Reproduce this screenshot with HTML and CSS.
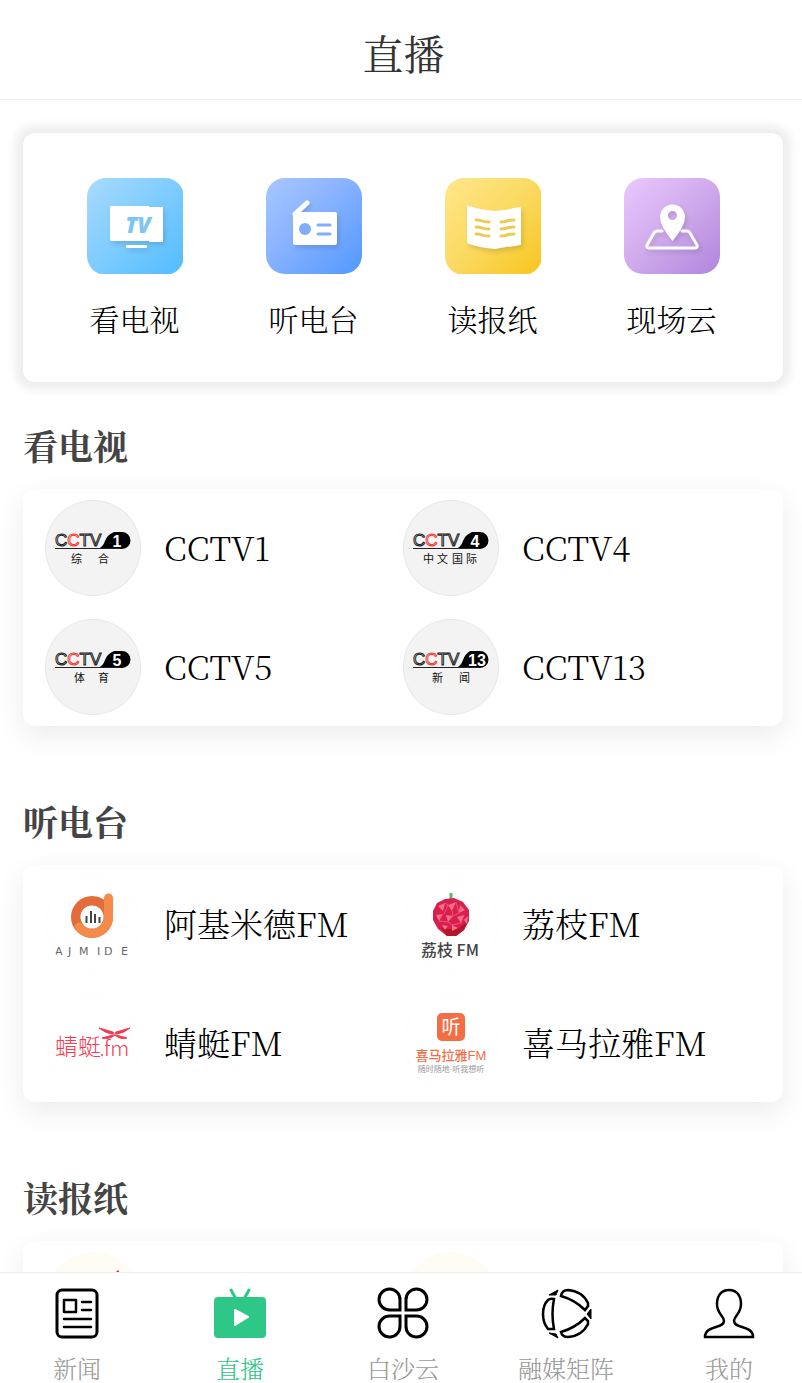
FILE: index.html
```
<!DOCTYPE html>
<html lang="zh-CN">
<head>
<meta charset="utf-8">
<meta name="viewport" content="width=device-width, initial-scale=1">
<title>直播</title>
<link rel="stylesheet" href="styles.css">
</head>

<body>
<header class="header">
    <h1>直播</h1>
</header>

<main class="content">
    <!-- 快捷入口 -->
    <nav class="entry">
        <a href="#tv">
            <svg viewBox="0 0 96 96">
                <defs><linearGradient id="g1" x1="0" y1="0" x2="1" y2="1"><stop offset="0" stop-color="#a9dbff"/><stop offset="1" stop-color="#51bcff"/></linearGradient></defs>
                <rect width="97" height="97" rx="19" fill="url(#g1)"/>
                <g class="glyph">
                    <path d="M24 28h38v1h14v35H62v-1H24q-1 0-1-1V29q0-1 1-1z" fill="#fff"/>
                    <rect x="39" y="67" width="21" height="3" rx="1" fill="#fff"/>
                </g>
                <text class="tv" x="51" y="55">TV</text>
            </svg>
            <span>看电视</span>
        </a>
        <a href="#radio">
            <svg viewBox="0 0 96 96">
                <defs><linearGradient id="g2" x1="0" y1="0" x2="1" y2="1"><stop offset="0" stop-color="#a8c7ff"/><stop offset=".4" stop-color="#8cb4ff"/><stop offset="1" stop-color="#5198ff"/></linearGradient></defs>
                <rect width="96" height="96" rx="19" fill="url(#g2)"/>
                <g class="glyph" fill="#fff">
                    <path d="M29 36L41 25" stroke="#fff" stroke-width="5" stroke-linecap="round"/>
                    <path d="M27 37q0-3 3-3h39q2 0 2 2v29q0 2-2 2H29q-2 0-2-2z"/>
                </g>
                <circle cx="39" cy="51" r="6" fill="#82adfa"/>
                <path d="M52 47h12M52 56h12" stroke="#82adfa" stroke-width="3" stroke-linecap="round"/>
            </svg>
            <span>听电台</span>
        </a>
        <a href="#paper">
            <svg viewBox="0 0 96 96">
                <defs><linearGradient id="g3" x1="0" y1="0" x2="1" y2="1"><stop offset="0" stop-color="#ffe78c"/><stop offset=".5" stop-color="#fbd961"/><stop offset="1" stop-color="#f7c51c"/></linearGradient></defs>
                <rect width="97" height="97" rx="19" fill="url(#g3)"/>
                <path class="glyph" d="M22 29q0-2 2-1 12 4 26 5 12-1 24-4 2 0 2 1v37q-14 2-26 4-14-1-26-5-2 0-2-2z" fill="#fff"/>
                <path d="M31 42q4 0 6 1t7 1M31 49q4 0 6 1t7 1M31 56q4 0 6 1t7 1M56 44q3 0 6-1t7-1M56 51q3 0 6-1t7-1M56 58q3 0 6-1t7-1" fill="none" stroke="#f0ca50" stroke-width="3" stroke-linecap="round"/>
            </svg>
            <span>读报纸</span>
        </a>
        <a href="#cloud">
            <svg viewBox="0 0 96 96">
                <defs><linearGradient id="g4" x1="0" y1="0" x2="1" y2="1"><stop offset="0" stop-color="#eac8ff"/><stop offset=".5" stop-color="#cfaaec"/><stop offset="1" stop-color="#b084dd"/></linearGradient></defs>
                <rect width="96" height="96" rx="19" fill="url(#g4)"/>
                <g class="glyph">
                    <path d="M38 53h-5q-2 0-3 2l-7 12q-1 3 2 3h46q3 0 2-3l-7-12q-1-2-3-2h-5" fill="none" stroke="#fff" stroke-width="3" stroke-linecap="round"/>
                    <path fill-rule="evenodd" d="M48.500 63Q36 48 36 39a12.500 12.500 0 0 1 25 0Q61 48 48.500 63zM48.500 33a4.500 4.500 0 1 0 0 9a4.500 4.500 0 0 0 0-9z" fill="#fff"/>
                </g>
            </svg>
            <span>现场云</span>
        </a>
    </nav>

    <section id="tv">
        <h2>看电视</h2>
        <div class="list">
            <a href="#cctv1">
                <svg class="logo gray" viewBox="0 0 96 96">
                    <text class="cctv" x="10" y="46">C<tspan class="red">C</tspan>TV</text>
                    <path d="M53 49Q58 47 60 41T69 32H77a8 8 0 0 1 0 17z"/><path class="line" d="M10 48.500h66"/>
                    <text class="num" x="72" y="47">1</text>
                    <text class="sub" x="26" y="63">综</text><text class="sub" x="53" y="63">合</text>
                </svg>
                <span>CCTV1</span>
            </a>
            <a href="#cctv4">
                <svg class="logo gray" viewBox="0 0 96 96">
                    <text class="cctv" x="10" y="46">C<tspan class="red">C</tspan>TV</text>
                    <path d="M53 49Q58 47 60 41T69 32H77a8 8 0 0 1 0 17z"/><path class="line" d="M10 48.500h66"/>
                    <text class="num" x="72" y="47">4</text>
                    <text class="sub" x="20" y="63">中</text><text class="sub" x="34" y="63">文</text><text class="sub" x="49" y="63">国</text><text class="sub" x="63" y="63">际</text>
                </svg>
                <span>CCTV4</span>
            </a>
            <a href="#cctv5">
                <svg class="logo gray" viewBox="0 0 96 96">
                    <text class="cctv" x="10" y="46">C<tspan class="red">C</tspan>TV</text>
                    <path d="M53 49Q58 47 60 41T69 32H77a8 8 0 0 1 0 17z"/><path class="line" d="M10 48.500h66"/>
                    <text class="num" x="72" y="47">5</text>
                    <text class="sub" x="29" y="63">体</text><text class="sub" x="53" y="63">育</text>
                </svg>
                <span>CCTV5</span>
            </a>
            <a href="#cctv13">
                <svg class="logo gray" viewBox="0 0 96 96">
                    <text class="cctv" x="10" y="46">C<tspan class="red">C</tspan>TV</text>
                    <path d="M53 49Q58 47 60 41T67 32H77a8 8 0 0 1 0 17z"/><path class="line" d="M10 48.500h66"/>
                    <text class="num" x="74" y="47">13</text>
                    <text class="sub" x="29" y="63">新</text><text class="sub" x="56" y="63">闻</text>
                </svg>
                <span>CCTV13</span>
            </a>
        </div>
    </section>

    <section id="radio">
        <h2>听电台</h2>
        <div class="list">
            <a href="#ajmide">
                <svg class="logo faint" viewBox="0 0 96 96">
                    <circle cx="47" cy="41" r="16" fill="none" stroke="#e36c3b" stroke-width="10"/>
                    <path d="M63.500 22V41A16.500 16.500 0 0 1 34 51" fill="none" stroke="#f58b4b" stroke-width="9" stroke-linecap="round"/>
                    <circle cx="47" cy="41" r="11.500" fill="#fff"/>
                    <path d="M41.500 40v7M46 35v12M50 38v9M54.500 41v6" stroke="#444" stroke-width="2"/>
                    <text class="ajmide" x="10 23 34 52 59 76" y="79">AJMIDE</text>
                </svg>
                <span>阿基米德FM</span>
            </a>
            <a href="#lizhi">
                <svg class="logo faint" viewBox="0 0 96 96">
                    <path d="M48 17v9" stroke="#63b56b" stroke-width="3"/>
                    <path d="M34 27l8-4 9-1 9 4 6 8v11l-5 9-8 6h-9l-9-7-5-9v-9z" fill="#d91f4d"/>
                    <path d="M38 52l6 8h9l8-6 4-9-9 7-9 1z" fill="#b3152a"/>
                    <path d="M35 30l7-3-2 8zM45 29l8-3-4 9zM57 29l5 5-6 3zM33 39l7-1-4 7zM43 39l7 1-5 6zM54 41l7-2-3 8zM39 49l6 1-3 4zM49 49l6 3-6 3zM61 44l4-4-1 8z" fill="#f4708a"/>
                    <path d="M42 27l3 2-4 9M53 26l3 11-6 3-1-5M36 45l9 1 4 3 9-2 3-8" fill="none" stroke="#f45178"/>
                    <text class="lizhi" x="18" y="80">荔枝 FM</text>
                </svg>
                <span>荔枝FM</span>
            </a>
            <a href="#qingting">
                <svg class="logo faint" viewBox="0 0 96 96">
                    <text class="qingting" x="10" y="60">蜻蜓</text>
                    <circle cx="57" cy="60" r="1" fill="#f5394f"/>
                    <text class="fm" x="59" y="61">fm</text>
                    <path d="M54 33L68 37Q70 39 67 39Q60 38 54 33zM85 33L71 37Q69 39 72 39Q79 38 85 33zM68 40L57 43Q64 45 70 40zM71 40L82 43Q75 45 70 40z" fill="#f5394f" stroke="#f5394f"/>
                </svg>
                <span>蜻蜓FM</span>
            </a>
            <a href="#ximalaya">
                <svg class="logo faint" viewBox="0 0 96 96">
                    <rect x="34" y="18" width="28" height="28" rx="5" fill="#f36e45"/>
                    <text class="ting" x="48" y="39">听</text>
                    <text class="ximalaya" x="48" y="65">喜马拉雅FM</text>
                    <text class="slogan" x="48" y="77">随时随地·听我想听</text>
                </svg>
                <span>喜马拉雅FM</span>
            </a>
        </div>
    </section>

    <section id="paper">
        <h2>读报纸</h2>
        <div class="list">
            <a href="#paper1">
                <svg class="logo cream" viewBox="0 0 96 96"><path d="M71 20l2-2 2 3z" fill="#d33"/></svg>
            </a>
            <a href="#paper2">
                <svg class="logo cream" viewBox="0 0 96 96"></svg>
            </a>
        </div>
    </section>
</main>

<!-- 底部菜单 -->
<nav class="tabbar">
    <a href="#news">
        <svg viewBox="0 0 52 52" fill="none" stroke="#000" stroke-width="3" stroke-linecap="round" stroke-linejoin="round">
            <rect x="6" y="3" width="40" height="47" rx="5"/>
            <rect x="13" y="13" width="12" height="12" stroke-width="2.500"/>
            <path d="M31 15h9M31 23h9M13 32h27M13 40h27" stroke-width="2.500"/>
        </svg>
        <span>新闻</span>
    </a>
    <a href="#live" class="on">
        <svg viewBox="0 0 52 52">
            <path d="M17 3l5 9M35 3l-5 9" stroke="#2ec788" stroke-width="3" stroke-linecap="round"/>
            <rect y="10" width="52" height="41" rx="4" fill="#2ec788"/>
            <path d="M21 23v15l13-8z" fill="#fff" stroke="#fff" stroke-width="2" stroke-linejoin="round"/>
        </svg>
        <span>直播</span>
    </a>
    <a href="#baisha">
        <svg viewBox="0 0 52 52" fill="none" stroke="#000" stroke-width="3">
            <path d="M23 23H13A10.500 10.500 0 1 1 23 13zM29 23V13A10.500 10.500 0 1 1 39 23zM23 29V39A10.500 10.500 0 1 1 13 29zM29 29H39A10.500 10.500 0 1 1 29 39z"/>
        </svg>
        <span>白沙云</span>
    </a>
    <a href="#matrix">
        <svg viewBox="0 0 52 52" fill="none" stroke="#000" stroke-width="2.500">
            <path d="M8 13Q3 18 3 27T8 42H14Q11 27 14 12Q10 11 8 13z"/>
            <path d="M21 9Q22 3 28 3Q42 4 48 16L48 19L45 23Q35 13 21 9z"/>
            <path d="M21 45Q22 50 28 50Q42 49 48 37L48 34L45 31Q35 41 21 45z"/>
            <path d="M9 8L18 3 16 8zM9 46L18 51 16 47zM47 27L51 22V32z" fill="#000" stroke-width="1"/>
        </svg>
        <span>融媒矩阵</span>
    </a>
    <a href="#mine">
        <svg viewBox="0 0 52 52" fill="none" stroke="#000" stroke-width="2.500">
            <path d="M26 3C34 3 38 9 38 17C38 27 31 29 31 34C31 42 50 38 50 50H2C2 38 21 42 21 34C21 29 14 27 14 17C14 9 18 3 26 3z"/>
        </svg>
        <span>我的</span>
    </a>
</nav>
</body>
</html>
```
FILE: styles.css
```
*{ margin: 0; padding: 0; box-sizing: border-box; text-decoration: none;}
body { height: 100vh; display: flex; flex-direction: column; background: #fff; color: #000; font-family: "Noto Serif CJK SC", "Noto Serif SC", "Liberation Serif", "Noto Sans CJK SC", serif; font-weight: 300;}
a { color: inherit;}
svg { display: block; flex: none;}

.header { height: 100px; padding: 0 0 0 5px; border-bottom: 1px solid #eee; display: flex; align-items: center; justify-content: center; flex: none;}
.header h1 { font-size: 41px; line-height: 60px; padding-top: 6px; font-weight: normal; color: #333;}

.content { flex: 1; min-height: 0; overflow: auto; scrollbar-width: none; padding: 33px 19px 24px 23px;}

.entry { display: grid; grid-template-columns: repeat(4, 1fr); padding: 45px 22px 42px; border-radius: 12px; background: #fff; box-shadow: 0 0 10px 8px #eee;}
.entry a { display: flex; flex-direction: column; align-items: center; gap: 22px; font-size: 30px; line-height: 44px;}
.entry svg { width: 96px; height: 96px;}
.glyph { filter: drop-shadow(2px 3px 2px rgba(0,0,0,.12));}
.tv { font: italic 800 22px "Open Sans", sans-serif; fill: #7cc5f5; text-anchor: middle;}

section { margin-bottom: 69px;}
.entry + section { margin-top: 37px;}
h2 { font-size: 35px; line-height: 52px; font-weight: bold; color: #444; margin-bottom: 18px;}
.list { display: grid; grid-template-columns: 1fr 1fr; row-gap: 23px; padding: 11px 22px; border-radius: 12px; background: #fff; box-shadow: 0 10px 30px rgba(0,0,0,.08);}
.list a { display: flex; align-items: center; gap: 23px; font-size: 33px; line-height: 48px;}
.list span { padding-bottom: 2px;}

/* 圆形台标 */
.logo { width: 96px; height: 96px; border-radius: 50%;}
.gray { background: #f3f3f3; box-shadow: inset 0 0 0 1px #e9e9e9;}
.faint { box-shadow: inset 0 0 0 1px #fcfcfc;}
.cream { background: #fffcf3;}
.cctv { font: 17px "Liberation Sans", sans-serif; fill: #f3f3f3; stroke: #222; stroke-width: 1px;}
.cctv .red { stroke: #f03c32;}
.line { stroke: #222; stroke-width: 1px;}
.num { font: bold 16px "Liberation Sans", sans-serif; fill: #fff; text-anchor: middle;}
.sub { font: 11px "Noto Sans CJK SC", sans-serif; fill: #111;}
.ajmide { font: 11px "DejaVu Sans", sans-serif; fill: #666;}
.lizhi { font: 500 16px "Noto Sans CJK SC", sans-serif; fill: #444;}
.qingting { font: 300 23px "Noto Sans CJK SC", sans-serif; fill: #f5394f;}
.fm { font: 300 21px "Noto Sans CJK SC", sans-serif; fill: #f5394f;}
.ting { font: 19px "Noto Sans CJK SC", sans-serif; fill: #fff; text-anchor: middle;}
.ximalaya { font: 500 13px "Liberation Sans", "Noto Sans CJK SC", sans-serif; fill: #f36e45; text-anchor: middle;}
.slogan { font: 8px "Liberation Sans", "Noto Sans CJK SC", sans-serif; fill: #999; text-anchor: middle;}

.tabbar { height: 111px; padding: 14px 25px 0 29px; border-top: 1px solid #eee; background: #fff; display: flex; justify-content: space-between; flex: none;}
.tabbar a { width: 96px; display: flex; flex-direction: column; align-items: center; gap: 12px; font-size: 24px; line-height: 34px; color: #999; white-space: nowrap;}
.tabbar svg { width: 52px; height: 52px;}
.tabbar .on { color: #2ec788;}
```
